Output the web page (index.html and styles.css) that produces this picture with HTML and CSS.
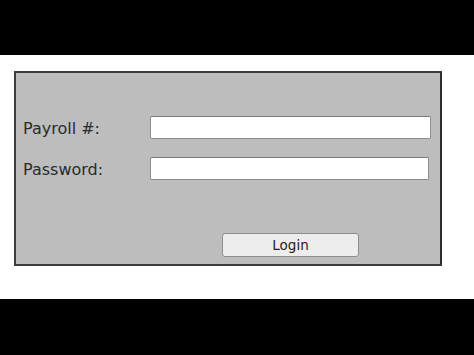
FILE: index.html
```html
<!DOCTYPE html>
<html>
<head>
<meta charset="utf-8">
<link rel="stylesheet" href="styles.css">
</head>
<body>
<div class="bar bar-top"></div>
<main class="stage">
  <form class="login-box">
    <div class="row">
      <label class="label" for="payroll">Payroll #:</label>
      <input class="field field-wide" id="payroll" type="text">
    </div>
    <div class="row">
      <label class="label" for="password">Password:</label>
      <input class="field" id="password" type="password">
    </div>
    <div class="actions">
      <button class="btn" type="button">Login</button>
    </div>
  </form>
</main>
<div class="bar bar-bottom"></div>
</body>
</html>
```

FILE: styles.css
```css
html, body {
  margin: 0;
  padding: 0;
  background: #ffffff;
  font-family: "DejaVu Sans", Verdana, sans-serif;
}
.bar {
  background: #000000;
}
.bar-top {
  height: 55px;
}
.bar-bottom {
  height: 56px;
}
.stage {
  height: 244px;
  padding: 16px 0 0 14px;
  box-sizing: border-box;
}
.login-box {
  width: 428px;
  height: 195px;
  box-sizing: border-box;
  border: 2px solid #3c3c3c;
  border-right-color: #2e2e2e;
  background: #bdbdbd;
  padding: 43px 0 0 7px;
  display: flex;
  flex-direction: column;
  gap: 18px;
}
.row {
  display: flex;
  align-items: center;
  height: 23px;
}
.label {
  width: 127px;
  font-size: 16px;
  color: #2b2b2b;
  line-height: 23px;
  padding-top: 1px;
}
.field {
  width: 279px;
  height: 23px;
  box-sizing: border-box;
  margin: 0;
  border: 1px solid #8c8c8c;
  border-top-color: #7a7a7a;
  border-radius: 2px;
  background: #ffffff;
  padding: 0 4px;
}
.field-wide {
  width: 281px;
}
.actions {
  margin-top: 35px;
  padding-left: 199px;
}
.btn {
  width: 137px;
  height: 24px;
  margin: 0;
  box-sizing: border-box;
  border: 1px solid #8e8e8e;
  border-radius: 3px;
  background: #ededed;
  color: #222222;
  font-family: "DejaVu Sans", Verdana, sans-serif;
  font-size: 13.5px;
  padding: 0;
  line-height: 22px;
}
```
